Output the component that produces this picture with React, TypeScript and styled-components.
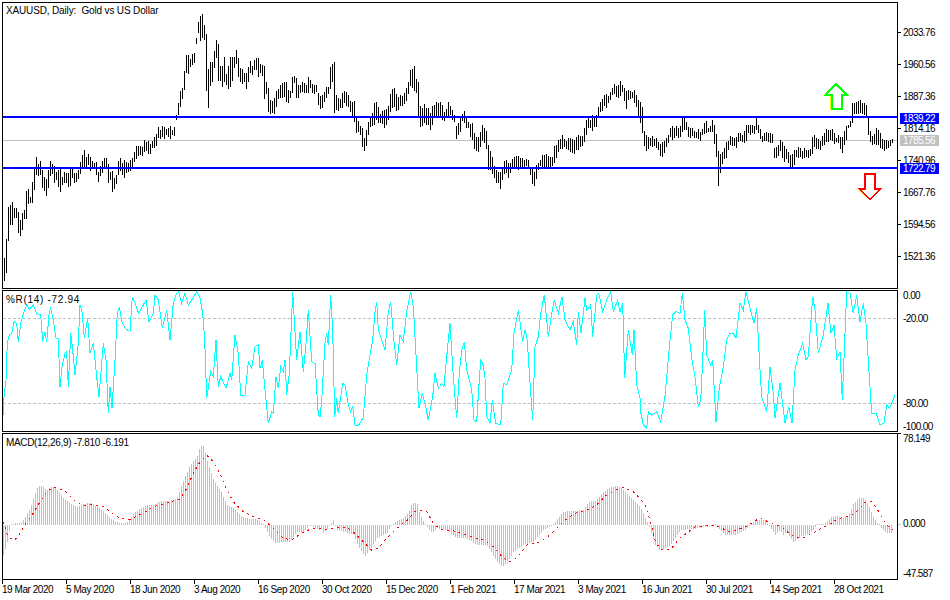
import React from "react";
import styled, { createGlobalStyle } from "styled-components";

type Bar = [number, number, number];
type Pt = [number, number];

// readings are taken from 3x crops, so they get scaled back to page pixels
const barsFrom = (rows: Bar[], ox: number, oy: number, from: number, to: number): Bar[] =>
  rows
    .map(([x, t, b]): Bar => [ox + x / 3, oy + t / 3, oy + b / 3])
    .filter(([x]) => x >= from && x < to);

const ptsFrom = (rows: Pt[], ox: number, oy: number, from = 0, to = 9999): Pt[] =>
  rows.map(([x, y]): Pt => [ox + x / 3, oy + y / 3]).filter(([x]) => x >= from && x < to);

const startBars: Bar[] = [[13,325,392],[19,268,370],[25,170,272],[31,165,225],[37,155,225],[43,175,203],[49,175,205],[55,187,250],[61,210,258],[67,188,240],[73,180,207],[79,123,207],[85,117,162],[91,140,160],[97,97,158],[103,55,120],[109,22,75],[115,42,78],[121,33,75],[127,60,113],[133,82,122],[139,88,138],[145,60,113],[151,33,78],[157,42,72],[163,48,100],[169,65,90],[175,60,110],[181,55,125],[187,80,105],[193,65,98],[199,70,100],[205,70,110],[211,55,108],[217,55,85],[223,70,100],[229,70,97],[235,60,88],[241,37,72],[247,15,55],[253,0,50],[259,22,55],[265,12,45],[271,22,62],[277,33,52],[283,40,55],[289,37,75],[295,65,95],[301,48,78],[307,33,70],[313,25,55],[319,25,58],[325,42,100],[331,65,90],[337,62,125],[343,85,117],[349,75,103],[355,33,75]];
const riseBars: Bar[] = [[360,475,520],[375,490,530],[385,490,515],[395,475,510],[405,450,480],[412,430,475],[420,440,470],[428,435,465],[438,420,455],[450,425,460],[458,430,445],[465,405,445],[475,380,415],[485,385,415],[495,385,412],[505,385,412],[515,385,410],[525,380,402]];
const peakBars: Bar[] = [[19,330,345],[25,295,330],[31,258,305],[37,250,282],[43,198,255],[49,150,205],[55,150,207],[61,162,187],[67,147,180],[73,145,175],[79,98,117],[85,50,85],[91,33,108],[97,27,100],[103,60,105],[109,87,258],[115,192,308],[121,170,243],[127,172,230],[133,138,190],[139,105,158],[145,117,228],[151,183,228],[157,183,245],[163,155,230],[169,207,240],[175,183,253],[181,155,245],[187,157,228],[193,157,190],[199,135,178],[205,160,215],[211,190,232],[217,193,238],[223,203,230],[229,205,252],[235,185,232],[241,168,205],[247,183,210],[253,165,195],[259,160,195],[265,158,215],[271,178,205],[277,180,212],[283,183,282],[289,232,267],[295,250,320],[301,285,328],[307,288,325],[313,280,327],[319,258,305],[325,252,282],[331,240,278],[337,235,280],[343,232,275],[349,230,290],[355,255,293],[361,258,280],[367,215,265],[373,213,235],[379,220,280],[385,240,280],[391,240,263],[397,232,262],[403,235,265],[409,240,265],[415,217,265],[421,225,248],[427,238,265],[433,240,268],[439,240,262],[445,265,300],[451,272,312],[457,270,308],[463,260,292],[469,245,280],[475,245,268],[481,185,252],[487,178,232],[493,172,323],[499,270,315],[505,278,318]];
const midBars: Bar[] = [[0,140,175],[10,135,165],[20,100,165],[32,50,110],[43,37,188],[50,135,180],[60,145,175],[70,125,170],[80,125,160],[90,150,185],[103,152,215],[110,205,255],[120,228,250],[127,235,290],[133,265,303],[140,235,285],[147,210,245],[153,195,225],[165,155,220],[172,155,205],[180,185,225],[190,190,230],[200,180,225],[207,165,205],[212,125,180],[222,115,175],[235,140,180],[245,140,165],[258,125,155],[270,65,115],[282,45,120],[290,85,125],[296,100,220],[302,180,235],[312,170,215],[325,175,225],[332,190,243],[340,165,212],[348,155,200],[360,158,205],[375,185,210],[385,155,200],[395,170,205],[403,195,215],[410,235,275],[420,205,245],[428,190,215],[434,180,220],[445,215,235],[457,220,270],[465,258,298],[475,260,305],[485,232,280],[493,235,280],[500,245,300],[505,285,360],[512,305,360],[520,330,380],[528,360,398],[535,365,400],[543,365,415],[552,335,375],[558,330,365],[565,340,385],[575,330,350],[585,312,350],[590,320,358],[600,325,350],[615,325,352],[625,330,355],[632,360,378],[642,365,415],[650,345,378],[655,340,360],[665,325,350],[675,310,348],[685,318,350],[695,320,350],[705,290,340],[715,270,305],[725,255,295],[740,268,295],[750,270,300],[762,270,310],[775,255,300],[785,265,295],[795,230,275],[802,195,240],[810,205,230],[820,195,240],[830,190,230],[838,162,188],[845,150,185],[855,135,170],[870,135,158],[878,105,135],[890,110,145],[902,100,130],[910,110,130],[918,125,180],[925,120,150],[935,118,145],[945,118,160],[955,150,198]];
const lateBars: Bar[] = [[0,58,85],[10,60,90],[20,58,100],[27,90,130],[37,110,190],[44,195,235],[50,195,245],[57,205,235],[67,198,230],[80,205,228],[92,218,260],[100,220,255],[107,205,240],[113,200,215],[122,175,205],[130,175,205],[137,170,200],[145,175,205],[155,150,190],[165,148,175],[175,170,200],[185,175,205],[195,180,205],[205,178,208],[215,180,205],[225,150,185],[235,175,185],[247,150,185],[258,185,248],[265,243,347],[272,255,302],[280,245,272],[290,220,258],[300,200,225],[310,200,228],[320,195,228],[328,180,215],[338,195,222],[347,165,215],[355,165,190],[370,168,190],[380,148,182],[393,190,218],[405,195,218],[415,190,215],[425,180,210],[433,235,265],[442,235,270],[450,212,245],[458,212,250]];
const endBars: Bar[] = [[0,210,240],[6,215,260],[12,225,280],[18,235,265],[24,245,275],[30,255,292],[36,255,292],[42,240,290],[48,240,260],[55,232,265],[62,235,262],[70,235,262],[80,240,258],[90,240,258],[98,197,245],[105,195,225],[112,210,245],[120,205,240],[128,205,232],[138,175,215],[145,180,215],[152,180,210],[160,180,228],[167,198,212],[175,195,220],[187,200,250],[198,170,215],[205,165,175],[212,150,170],[216,100,165],[222,100,133],[228,97,133],[234,95,133],[240,90,130],[246,97,130],[252,100,135],[258,100,130],[264,130,190],[270,180,215],[276,200,225],[282,195,220],[288,172,225],[294,178,225],[300,185,232],[306,205,235],[312,210,245],[318,210,238],[324,212,235],[330,212,230],[336,205,220],[342,210,218]];

const priceBars: Bar[] = [
  ...barsFrom(startBars, 0, 150, 0, 119),
  ...barsFrom(riseBars, 0, 0, 119, 176),
  ...barsFrom(peakBars, 170, 5, 176, 339),
  ...barsFrom(midBars, 320, 50, 339, 640),
  ...barsFrom(lateBars, 630, 70, 640, 780),
  ...barsFrom(endBars, 780, 70, 780, 900),
];

const noise = (n: number) => {
  const v = Math.sin(n * 12.9898) * 43758.5453;
  return v - Math.floor(v) - 0.5;
};

const priceBarPath = () => {
  let d = "";
  for (let x = 4; x <= 894; x += 2) {
    const at = x + 1 / 3;
    const next = priceBars.findIndex((b) => b[0] >= at - 0.01);
    if (next < 0) break;
    const b = priceBars[next];
    const a = priceBars[Math.max(next - 1, 0)];
    const gap = b[0] - a[0];
    const k = gap > 0 ? (at - a[0]) / gap : 1;
    const jitter = gap > 2.5 && k < 0.98 ? 5 : 0;
    const top = Math.round(a[1] + (b[1] - a[1]) * k + noise(x) * jitter);
    const bottom = Math.round(a[2] + (b[2] - a[2]) * k + noise(x + 0.5) * jitter);
    d += `M${x + 0.5} ${top}V${Math.max(bottom, top + 3)}`;
  }
  return d;
};

const wprLeft: Pt[] = [[10,404],[12,350],[18,300],[22,190],[28,165],[35,160],[42,125],[50,130],[55,185],[62,130],[72,95],[80,75],[88,88],[100,75],[110,100],[122,105],[128,185],[135,155],[140,185],[148,95],[152,85],[160,120],[168,175],[175,175],[180,320],[186,260],[195,220],[200,215],[205,320],[212,160],[218,210],[225,285],[235,190],[240,75],[246,95],[253,175],[263,115],[270,220],[280,190],[290,290],[297,350],[310,190],[318,240],[325,400],[330,320],[336,385],[345,240],[352,100],[358,80],[365,125],[375,145],[390,155],[397,50],[405,70],[416,100],[438,60],[447,125],[460,100],[465,45],[475,60],[487,145],[500,90],[510,180],[520,70],[530,40],[536,35],[545,70],[555,40],[565,75],[575,60],[590,35],[600,55],[608,100],[614,180],[620,355],[632,275],[640,290],[648,180],[655,320],[662,290],[678,325],[690,280],[695,300],[705,165],[715,220],[722,345],[735,345],[745,245],[755,265],[765,200],[775,195],[780,265],[787,240],[795,330],[805,430],[815,395],[820,400],[828,290],[835,325],[842,260],[850,275],[855,240],[860,345],[868,280],[878,35],[884,140],[890,240],[900,155],[910,275],[918,190],[925,90],[935,245],[945,250],[955,405]];
const wprMid: Pt[] = [[0,410],[5,360],[15,190],[20,160],[25,195],[32,45],[38,150],[44,410],[50,355],[55,400],[68,310],[75,315],[85,375],[92,395],[98,380],[105,435],[115,437],[130,412],[140,285],[150,225],[158,180],[165,95],[170,65],[175,150],[185,180],[195,210],[205,95],[212,65],[222,185],[230,255],[240,165],[250,185],[260,95],[272,35],[280,80],[290,260],[297,385],[307,340],[315,370],[325,420],[338,350],[345,280],[355,325],[365,310],[372,320],[380,230],[390,130],[400,290],[410,415],[418,280],[425,210],[433,185],[440,270],[455,330],[462,420],[470,425],[478,300],[482,240],[490,255],[495,295],[500,410],[510,430],[517,360],[527,430],[542,435],[550,310],[560,315],[575,270],[582,160],[595,90],[608,185],[615,150],[622,180],[630,310],[638,420],[645,200],[655,170],[662,100],[673,45],[685,170],[695,100],[703,60],[715,100],[726,50],[735,120],[750,150],[760,125],[770,195],[775,95],[783,160],[795,55],[800,90],[812,75],[818,170],[830,45],[836,40],[848,95],[860,60],[872,35],[880,95],[893,60],[900,95],[908,70],[914,295],[925,150],[937,225],[942,150],[950,315],[960,355]];
const wprRight: Pt[] = [[30,385],[40,435],[50,445],[55,395],[65,405],[80,395],[92,425],[105,350],[120,180],[128,105],[138,95],[150,100],[157,40],[165,120],[175,145],[185,235],[195,290],[205,380],[212,360],[218,240],[224,90],[230,225],[242,255],[248,240],[258,425],[268,325],[280,260],[290,180],[300,160],[310,160],[318,175],[330,70],[340,90],[348,35],[360,85],[372,130],[380,85],[390,270],[395,350],[410,395],[420,260],[430,340],[435,415],[450,310],[465,430],[476,380],[486,430],[495,270],[505,225],[518,190],[528,240],[535,230],[548,50],[555,90],[565,220],[580,165],[594,70],[603,160],[612,135],[620,235],[630,215],[637,360],[650,35],[660,40],[670,100],[680,45],[690,125],[700,70],[708,130],[716,260],[725,400],[738,400],[750,435],[762,430],[770,375],[778,385],[785,370],[795,345]];

const wprLine: Pt[] = [
  ...ptsFrom(wprLeft, 0, 280),
  ...ptsFrom(wprMid, 320, 280),
  ...ptsFrom(wprRight, 630, 280),
];

const histLeft: Pt[] = [[10,375],[20,340],[30,285],[40,280],[60,280],[70,270],[80,250],[90,235],[100,205],[110,175],[120,165],[130,172],[140,180],[150,170],[160,170],[170,180],[190,205],[210,220],[230,232],[250,222],[270,218],[290,230],[310,245],[330,265],[345,275],[360,280],[380,278],[400,250],[420,235],[440,225],[460,225],[480,213],[510,212],[530,205],[550,150],[570,105],[590,80],[600,48],[610,48],[620,90],[640,150],[660,180],[680,225],[700,235],[720,255],[740,265],[770,268],[790,285],[810,325],[825,340],[850,335],[870,335],[890,305],[910,305],[930,285],[958,300]];
const histMid: Pt[] = [[0,290],[10,310],[30,285],[38,268],[50,300],[70,305],[100,315],[115,350],[133,380],[155,350],[170,325],[200,310],[215,285],[230,272],[250,262],[265,250],[275,220],[290,220],[300,255],[315,285],[335,308],[350,295],[380,300],[410,325],[440,325],[470,345],[500,345],[530,395],[545,410],[560,400],[580,365],[610,345],[640,335],[670,300],[700,285],[715,262],[730,245],[760,243],[790,240],[805,215],[825,213],[850,185],[875,170],[895,168],[920,190],[945,215],[960,230]];
const histLate: Pt[] = [[648,524],[655,545],[660,551],[670,545],[680,530],[700,528],[715,525],[725,535],[735,535],[745,530],[755,520],[765,520],[775,535]];
const histEnd: Pt[] = [[0,300],[10,315],[20,305],[40,338],[60,320],[90,310],[110,285],[135,280],[150,262],[170,258],[190,265],[205,255],[220,220],[235,205],[250,203],[265,225],[280,265],[300,290],[320,310],[340,310]];

const histLine: Pt[] = [
  ...ptsFrom(histLeft, 0, 430),
  ...ptsFrom(histMid, 320, 430),
  ...histLate,
  ...ptsFrom(histEnd, 780, 430),
];

const sigLeft: Pt[] = [[10,275],[20,310],[30,325],[45,330],[60,310],[80,275],[100,250],[120,215],[140,185],[160,172],[180,178],[200,187],[230,218],[250,226],[280,224],[310,230],[340,252],[360,265],[390,268],[410,258],[430,250],[460,230],[490,222],[520,213],[540,207],[560,175],[580,130],[600,95],[620,76],[640,95],[660,130],[680,180],[700,215],[730,245],[770,265],[790,268],[820,295],[850,325],[875,330],[905,310],[930,298],[958,295]];
const sigMid: Pt[] = [[0,295],[20,298],[50,292],[80,292],[100,305],[130,335],[155,360],[175,355],[200,325],[230,295],[265,268],[285,245],[300,240],[320,245],[340,280],[360,298],[400,302],[430,313],[460,322],[490,330],[520,350],[550,385],[570,395],[590,385],[620,345],[660,335],[690,315],[720,285],[745,262],[770,248],[800,240],[830,225],[860,195],[890,178],[910,173],[940,185],[960,205]];
const sigLate: Pt[] = [[645,505],[650,520],[655,540],[660,549],[670,550],[680,538],[695,527],[715,525],[730,532],[745,527],[760,518],[775,525]];
const sigEnd: Pt[] = [[5,290],[25,308],[45,322],[65,325],[95,312],[115,300],[135,290],[155,280],[170,268],[190,262],[205,260],[225,250],[240,235],[255,217],[275,215],[290,235],[310,270],[325,290],[340,300]];

const signalLine: Pt[] = [
  ...ptsFrom(sigLeft, 0, 430),
  ...ptsFrom(sigMid, 320, 430),
  ...sigLate,
  ...ptsFrom(sigEnd, 780, 430),
];

const MACD_ZERO = 524;

const histPath = () => {
  let d = "";
  for (let x = 3; x <= 892; x += 2) {
    const next = histLine.findIndex((p) => p[0] >= x);
    if (next < 0) break;
    const b = histLine[next];
    const a = histLine[Math.max(next - 1, 0)];
    const k = b[0] > a[0] ? (x - a[0]) / (b[0] - a[0]) : 1;
    const y = Math.round(a[1] + (b[1] - a[1]) * k);
    d += `M${x + 0.5} ${MACD_ZERO + 1}V${y === MACD_ZERO + 1 ? y - 1 : y}`;
  }
  return d;
};

const toPoints = (line: Pt[]) => line.map(([x, y]) => `${x.toFixed(1)},${y.toFixed(1)}`).join(" ");

const priceTicks = [
  { y: 32, text: "2033.76" },
  { y: 64, text: "1960.56" },
  { y: 96, text: "1887.36" },
  { y: 128, text: "1814.16" },
  { y: 160, text: "1740.96" },
  { y: 192, text: "1667.76" },
  { y: 224, text: "1594.56" },
  { y: 256, text: "1521.36" },
];

const wprLabels = [
  { y: 295, text: "0.00" },
  { y: 318, text: "-20.00" },
  { y: 403, text: "-80.00" },
  { y: 426, text: "-100.00" },
];

const macdLabels = [
  { y: 438, text: "78.149" },
  { y: 523, text: "0.000" },
  { y: 573, text: "-47.587" },
];

const dates = [
  "19 Mar 2020", "5 May 2020", "18 Jun 2020", "3 Aug 2020", "16 Sep 2020", "30 Oct 2020", "15 Dec 2020",
  "1 Feb 2021", "17 Mar 2021", "3 May 2021", "16 Jun 2021", "30 Jul 2021", "14 Sep 2021", "28 Oct 2021",
];

const PANE_MAIN = 2;
const PANE_WPR = 290;
const PANE_MACD = 433;

const App = () => {
  return (
    <Page>
      <GlobalStyle />
      <ChartStack>
        <Pane $height={287}>
          <Plot>
            <Drawing viewBox="3 3 894 285" shapeRendering="crispEdges">
              <rect x="3" y="140" width="894" height="1" fill="#c0c0c0" />
              <path d={priceBarPath()} stroke="#000" fill="none" />
              <rect x="3" y="116" width="894" height="2" fill="#0000ff" />
              <rect x="3" y="167" width="894" height="2" fill="#0000ff" />
              <path d="M824.5 95L835.5 84L846.5 95H841V109H830V95Z" fill="none" stroke="#ffff00" />
              <path d="M825.5 95L836 84L847 95H841.5V109H831.5V95Z" fill="#fff" stroke="#00ff00" strokeWidth="2" />
              <path d="M864 174H875V189H880L869.5 199.5L858 189H864Z" fill="none" stroke="#ffff00" />
              <path d="M865 174H875V189H880.5L870 199.5L859.5 189H865Z" fill="#fff" stroke="#ff0000" strokeWidth="2" />
            </Drawing>
            <Legend $top={2} $spacing={-0.15}>{"XAUUSD, Daily:  Gold vs US Dollar"}</Legend>
          </Plot>
          <PriceScale>
            {priceTicks.map((t) => (
              <ScaleTick key={t.y} $y={t.y - PANE_MAIN} />
            ))}
            {priceTicks.map((t) => (
              <ScaleLabel key={t.text} $y={t.y - PANE_MAIN}>{t.text}</ScaleLabel>
            ))}
            <PriceTag $y={117.5 - PANE_MAIN} $bg="#0000ff">1839.22</PriceTag>
            <PriceTag $y={140 - PANE_MAIN} $bg="#c0c0c0">1785.56</PriceTag>
            <PriceTag $y={168 - PANE_MAIN} $bg="#0000ff">1722.79</PriceTag>
          </PriceScale>
        </Pane>
        <Pane $height={142}>
          <Plot>
            <Drawing viewBox="3 291 894 140" shapeRendering="crispEdges">
              <path d="M3 318.5H897M3 403.5H897" stroke="#c0c0c0" strokeDasharray="3 2" />
              <polyline points={toPoints(wprLine)} fill="none" stroke="#00ffff" />
            </Drawing>
            <Legend $top={3} $spacing={0.7}>%R(14) -72.94</Legend>
          </Plot>
          <PriceScale>
            {wprLabels.map((t) => (
              <ScaleLabel key={t.text} $y={t.y - PANE_WPR}>{t.text}</ScaleLabel>
            ))}
          </PriceScale>
        </Pane>
        <Pane $height={147}>
          <Plot>
            <Drawing viewBox="3 434 894 145" shapeRendering="crispEdges">
              <path d={histPath()} stroke="#c0c0c0" fill="none" />
              <polyline points={toPoints(signalLine)} fill="none" stroke="#ff0000" strokeDasharray="2 4" />
            </Drawing>
            <Legend $top={3} $spacing={-0.33}>MACD(12,26,9) -7.810 -6.191</Legend>
          </Plot>
          <PriceScale>
            <ScaleTick $y={0} />
            <ScaleTick $y={MACD_ZERO - PANE_MACD} $muted />
            {macdLabels.map((t) => (
              <ScaleLabel key={t.text} $y={t.y - PANE_MACD}>{t.text}</ScaleLabel>
            ))}
          </PriceScale>
        </Pane>
      </ChartStack>
      <TimeAxis>
        {dates.map((d) => (
          <TimeCell key={d}>{d}</TimeCell>
        ))}
      </TimeAxis>
    </Page>
  );
};

export default App;

const GlobalStyle = createGlobalStyle`
  html, body {
    margin: 0;
    padding: 0;
    background: #fff;
  }
  * {
    box-sizing: border-box;
  }
`;

const Page = styled.div`
  width: 950px;
  height: 600px;
  padding: 2px 0 0 2px;
  display: flex;
  flex-direction: column;
  overflow: hidden;
  background: #fff;
  color: #000;
  font-family: "Liberation Sans", Arial, sans-serif;
  font-size: 10px;
`;

const ChartStack = styled.div`
  display: flex;
  flex-direction: column;
  gap: 1px;
`;

const Pane = styled.div<{ $height: number }>`
  height: ${(p) => p.$height}px;
  display: flex;
`;

const Plot = styled.div`
  position: relative;
  width: 896px;
  height: 100%;
  border: 1px solid #000;
  background: #fff;
`;

const Drawing = styled.svg`
  position: absolute;
  inset: 0;
  width: 100%;
  height: 100%;
  display: block;
`;

const Legend = styled.div<{ $top: number; $spacing: number }>`
  position: absolute;
  top: ${(p) => p.$top}px;
  left: 3px;
  line-height: 12px;
  letter-spacing: ${(p) => p.$spacing}px;
  white-space: pre;
`;

const PriceScale = styled.div`
  position: relative;
  flex: 1;
`;

const ScaleTick = styled.div<{ $y: number; $muted?: boolean }>`
  position: absolute;
  left: 0;
  top: ${(p) => p.$y}px;
  width: 3px;
  height: 1px;
  background: ${(p) => (p.$muted ? "#c0c0c0" : "#000")};
`;

const ScaleLabel = styled.div<{ $y: number }>`
  position: absolute;
  left: 5px;
  top: ${(p) => p.$y - 5}px;
  line-height: 12px;
  letter-spacing: -0.6px;
  white-space: nowrap;
`;

const PriceTag = styled.div<{ $y: number; $bg: string }>`
  position: absolute;
  left: 2px;
  top: ${(p) => p.$y - 5}px;
  width: 39px;
  height: 11px;
  padding-left: 3px;
  line-height: 11px;
  letter-spacing: -0.6px;
  color: #fff;
  background: ${(p) => p.$bg};
`;

const TimeAxis = styled.div`
  display: flex;
  height: 20px;
`;

const TimeCell = styled.div`
  position: relative;
  width: 64px;
  padding-top: 4px;
  line-height: 12px;
  letter-spacing: -0.45px;
  white-space: nowrap;

  &::before {
    content: "";
    position: absolute;
    left: 0;
    top: 0;
    width: 1px;
    height: 4px;
    background: #000;
  }
`;
